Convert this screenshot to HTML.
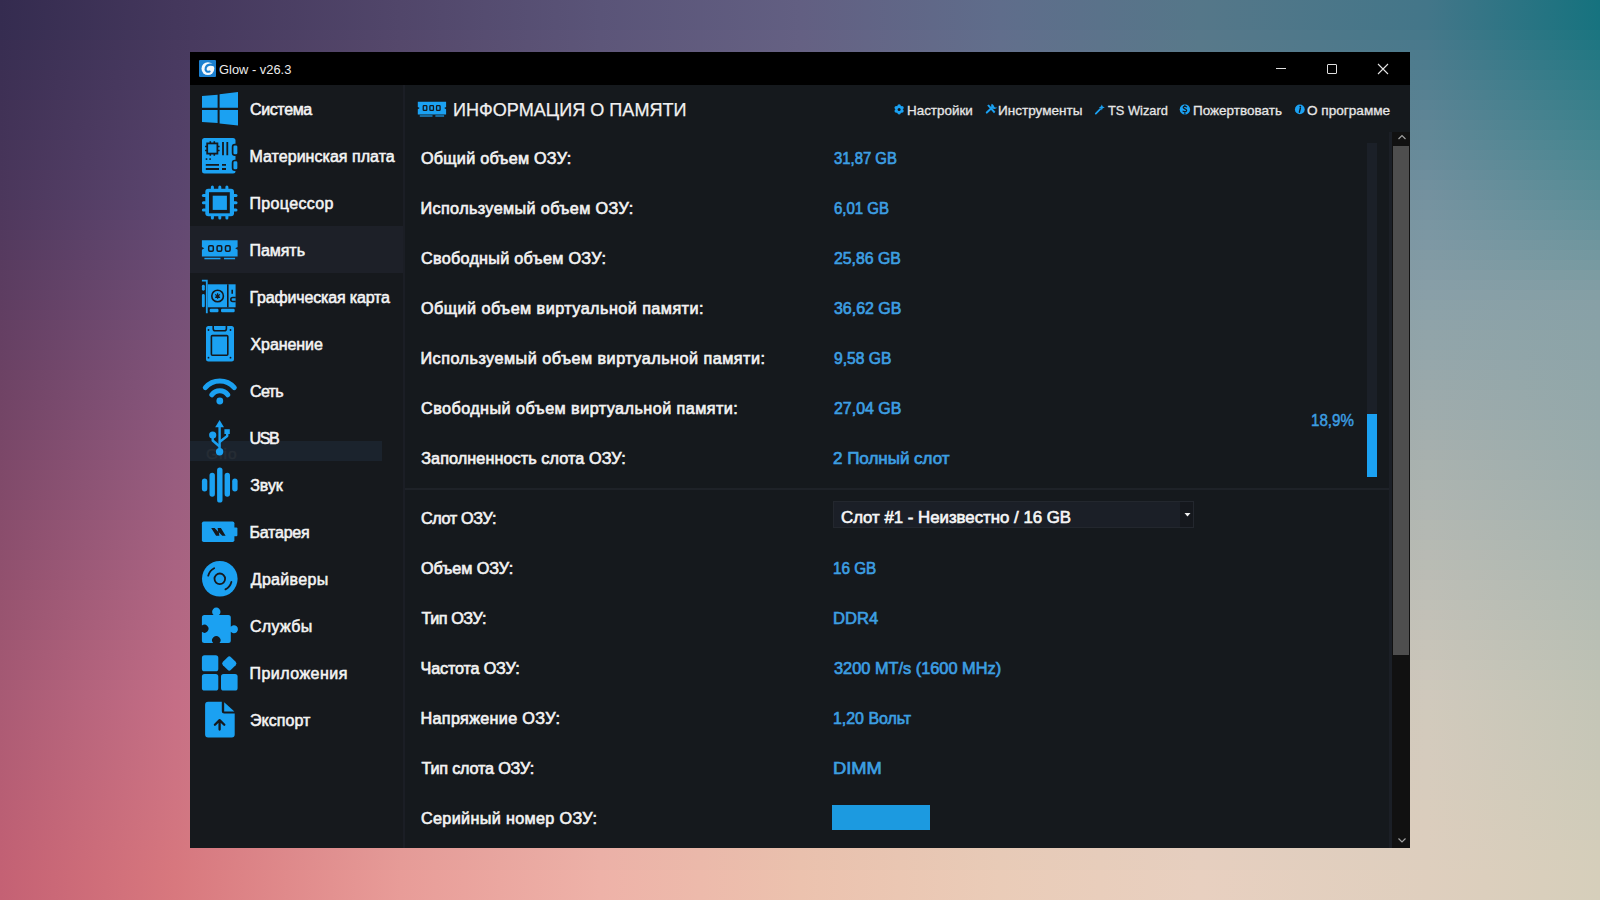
<!DOCTYPE html>
<html><head><meta charset="utf-8"><style>
*{margin:0;padding:0;box-sizing:border-box}
body{width:1600px;height:900px;overflow:hidden;position:relative;font-family:"Liberation Sans",sans-serif;background:#7a6a80}
.a{position:absolute}
.t{position:absolute;line-height:1;white-space:nowrap;transform-origin:0 0}
.ic{position:absolute;width:38px;height:36px}
.ic svg{display:block}
.st{position:absolute;left:250px;height:20px;line-height:20px;font-size:15px;font-weight:700;color:#f4f4f4;white-space:nowrap}
.lb{position:absolute;left:420px;height:20px;line-height:20px;font-size:15.7px;font-weight:700;color:#f2f2f2;white-space:nowrap}
.vl{position:absolute;left:833px;height:20px;line-height:20px;font-size:15.2px;font-weight:700;color:#3d9fe2;white-space:nowrap}
.mn{position:absolute;top:99px;height:20px;line-height:20px;font-size:13.2px;color:#e6e6e6;white-space:nowrap}
</style></head><body>
<div style="position:absolute;left:0;top:0px;width:1600px;height:10px;background:linear-gradient(90deg,#342b4f 0px,#44375c 175px,#51466a 400px,#5a5478 600px,#625f82 800px,#5f6d8b 1000px,#557789 1200px,#437689 1427px,#15727e 1600px)"></div>
<div style="position:absolute;left:0;top:10px;width:1600px;height:10px;background:linear-gradient(90deg,#352c50 0px,#44375c 175px,#51466a 400px,#5a5478 600px,#625f82 800px,#5f6d8b 1000px,#557789 1200px,#437689 1427px,#16737f 1600px)"></div>
<div style="position:absolute;left:0;top:20px;width:1600px;height:10px;background:linear-gradient(90deg,#352c50 0px,#44375c 175px,#51466a 400px,#5a5478 600px,#625f82 800px,#5f6d8b 1000px,#557789 1200px,#437689 1427px,#17737f 1600px)"></div>
<div style="position:absolute;left:0;top:30px;width:1600px;height:10px;background:linear-gradient(90deg,#362d51 0px,#45385d 175px,#53476b 400px,#5c5579 600px,#646083 800px,#616e8c 1000px,#57788a 1200px,#46788a 1427px,#1b7580 1600px)"></div>
<div style="position:absolute;left:0;top:40px;width:1600px;height:10px;background:linear-gradient(90deg,#382d51 0px,#47395e 175px,#55486b 400px,#5d5679 600px,#656183 800px,#626f8c 1000px,#58798a 1200px,#49798c 1427px,#1f7682 1600px)"></div>
<div style="position:absolute;left:0;top:50px;width:1600px;height:10px;background:linear-gradient(90deg,#392e52 0px,#483a5f 175px,#56496c 400px,#5f577a 600px,#676284 800px,#64708d 1000px,#5a7a8b 1200px,#4c7b8d 1427px,#237883 1600px)"></div>
<div style="position:absolute;left:0;top:60px;width:1600px;height:10px;background:linear-gradient(90deg,#3a2f53 0px,#493a61 175px,#584a6c 400px,#61587a 600px,#686484 800px,#66728d 1000px,#5c7b8c 1200px,#4e7c8e 1427px,#277985 1600px)"></div>
<div style="position:absolute;left:0;top:70px;width:1600px;height:10px;background:linear-gradient(90deg,#3c2f53 0px,#4b3b62 175px,#5a4b6d 400px,#63597b 600px,#6a6585 800px,#67738e 1000px,#5e7c8c 1200px,#517e90 1427px,#2b7b86 1600px)"></div>
<div style="position:absolute;left:0;top:80px;width:1600px;height:10px;background:linear-gradient(90deg,#3d3054 0px,#4c3c63 175px,#5c4c6d 400px,#645b7b 600px,#6c6685 800px,#69748e 1000px,#5f7d8d 1200px,#548091 1427px,#2f7c88 1600px)"></div>
<div style="position:absolute;left:0;top:90px;width:1600px;height:10px;background:linear-gradient(90deg,#3e3055 0px,#4e3d64 175px,#5d4d6e 400px,#665c7c 600px,#6d6786 800px,#6b758f 1000px,#617e8d 1200px,#578192 1427px,#337e89 1600px)"></div>
<div style="position:absolute;left:0;top:100px;width:1600px;height:10px;background:linear-gradient(90deg,#403155 0px,#4f3e65 175px,#5f4e6e 400px,#685d7d 600px,#6f6886 800px,#6c768f 1000px,#637f8e 1200px,#5a8394 1427px,#377f8a 1600px)"></div>
<div style="position:absolute;left:0;top:110px;width:1600px;height:10px;background:linear-gradient(90deg,#413256 0px,#503f66 175px,#614f6f 400px,#695e7d 600px,#706987 800px,#6e7790 1000px,#64808f 1200px,#5d8495 1427px,#3a818c 1600px)"></div>
<div style="position:absolute;left:0;top:120px;width:1600px;height:10px;background:linear-gradient(90deg,#423257 0px,#524067 175px,#63506f 400px,#6b5f7e 600px,#726a87 800px,#707890 1000px,#66818f 1200px,#608696 1427px,#3e828d 1600px)"></div>
<div style="position:absolute;left:0;top:130px;width:1600px;height:10px;background:linear-gradient(90deg,#433358 0px,#534069 175px,#645170 400px,#6d607e 600px,#746c88 800px,#717a91 1000px,#688290 1200px,#628897 1427px,#42848f 1600px)"></div>
<div style="position:absolute;left:0;top:140px;width:1600px;height:10px;background:linear-gradient(90deg,#453458 0px,#54416a 175px,#665270 400px,#6f617f 600px,#756d88 800px,#737b91 1000px,#6a8391 1200px,#658999 1427px,#468690 1600px)"></div>
<div style="position:absolute;left:0;top:150px;width:1600px;height:10px;background:linear-gradient(90deg,#463459 0px,#56426b 175px,#685371 400px,#70627f 600px,#776e89 800px,#757c92 1000px,#6b8491 1200px,#688b9a 1427px,#4a8792 1600px)"></div>
<div style="position:absolute;left:0;top:160px;width:1600px;height:10px;background:linear-gradient(90deg,#47355a 0px,#57436c 175px,#6a5471 400px,#726380 600px,#786f89 800px,#767d92 1000px,#6d8592 1200px,#6b8c9b 1427px,#4e8993 1600px)"></div>
<div style="position:absolute;left:0;top:170px;width:1600px;height:10px;background:linear-gradient(90deg,#49355a 0px,#59446d 175px,#6c5572 400px,#746481 600px,#7a708a 800px,#787e93 1000px,#6f8692 1200px,#6e8e9d 1427px,#528a94 1600px)"></div>
<div style="position:absolute;left:0;top:180px;width:1600px;height:10px;background:linear-gradient(90deg,#4a365b 0px,#5a456e 175px,#6d5672 400px,#756581 600px,#7c718a 800px,#7a7f93 1000px,#708793 1200px,#71909e 1427px,#568c96 1600px)"></div>
<div style="position:absolute;left:0;top:190px;width:1600px;height:10px;background:linear-gradient(90deg,#4b375c 0px,#5b466f 175px,#6f5773 400px,#776682 600px,#7d728b 800px,#7b8094 1000px,#728894 1200px,#74919f 1427px,#5a8d97 1600px)"></div>
<div style="position:absolute;left:0;top:200px;width:1600px;height:10px;background:linear-gradient(90deg,#4d375c 0px,#5d4670 175px,#715873 400px,#796882 600px,#7f748b 800px,#7d8294 1000px,#748a94 1200px,#7693a0 1427px,#5e8f99 1600px)"></div>
<div style="position:absolute;left:0;top:210px;width:1600px;height:10px;background:linear-gradient(90deg,#4f385d 0px,#5f4771 175px,#735a74 400px,#7b6983 600px,#81758c 800px,#7e8395 1000px,#768b95 1200px,#7894a1 1427px,#62919a 1600px)"></div>
<div style="position:absolute;left:0;top:220px;width:1600px;height:10px;background:linear-gradient(90deg,#50385d 0px,#624872 175px,#745a74 400px,#7c6a84 600px,#82768c 800px,#808496 1000px,#788c96 1200px,#7a96a2 1427px,#66929c 1600px)"></div>
<div style="position:absolute;left:0;top:230px;width:1600px;height:10px;background:linear-gradient(90deg,#52395e 0px,#644972 175px,#765c75 400px,#7e6b84 600px,#84778d 800px,#828596 1000px,#798d96 1200px,#7c97a3 1427px,#6b949d 1600px)"></div>
<div style="position:absolute;left:0;top:240px;width:1600px;height:10px;background:linear-gradient(90deg,#543a5e 0px,#664a73 175px,#785c76 400px,#806c85 600px,#86788d 800px,#838697 1000px,#7b8e97 1200px,#7e98a4 1427px,#6f969e 1600px)"></div>
<div style="position:absolute;left:0;top:250px;width:1600px;height:10px;background:linear-gradient(90deg,#563a5f 0px,#684a73 175px,#7a5e76 400px,#826d85 600px,#877a8e 800px,#858797 1000px,#7d8f98 1200px,#819aa4 1427px,#7398a0 1600px)"></div>
<div style="position:absolute;left:0;top:260px;width:1600px;height:10px;background:linear-gradient(90deg,#583b5f 0px,#6a4b74 175px,#7c5e77 400px,#846e86 600px,#897b8e 800px,#868898 1000px,#7f9099 1200px,#839ba5 1427px,#779aa1 1600px)"></div>
<div style="position:absolute;left:0;top:270px;width:1600px;height:10px;background:linear-gradient(90deg,#5a3c60 0px,#6c4c74 175px,#7e6078 400px,#866f86 600px,#8b7c8f 800px,#888998 1000px,#809199 1200px,#859ca6 1427px,#7c9ca2 1600px)"></div>
<div style="position:absolute;left:0;top:280px;width:1600px;height:10px;background:linear-gradient(90deg,#5b3c60 0px,#6f4d75 175px,#7f6078 400px,#877087 600px,#8c7d8f 800px,#8a8a99 1000px,#82929a 1200px,#879ea7 1427px,#809da4 1600px)"></div>
<div style="position:absolute;left:0;top:290px;width:1600px;height:10px;background:linear-gradient(90deg,#5d3d61 0px,#714e76 175px,#816279 400px,#897188 600px,#8e7e90 800px,#8b8b9a 1000px,#84939b 1200px,#899fa8 1427px,#849fa5 1600px)"></div>
<div style="position:absolute;left:0;top:300px;width:1600px;height:10px;background:linear-gradient(90deg,#5f3d61 0px,#734e76 175px,#836279 400px,#8b7388 600px,#908090 800px,#8d8d9a 1000px,#86959b 1200px,#8ba1a8 1427px,#87a0a6 1600px)"></div>
<div style="position:absolute;left:0;top:310px;width:1600px;height:10px;background:linear-gradient(90deg,#613e62 0px,#754f77 175px,#85647a 400px,#8d7489 600px,#918191 800px,#8e8e9b 1000px,#88969c 1200px,#8da2a9 1427px,#88a1a7 1600px)"></div>
<div style="position:absolute;left:0;top:320px;width:1600px;height:10px;background:linear-gradient(90deg,#633f62 0px,#775077 175px,#86647a 400px,#8e7589 600px,#938291 800px,#908f9b 1000px,#89979c 1200px,#8fa3a9 1427px,#89a2a7 1600px)"></div>
<div style="position:absolute;left:0;top:330px;width:1600px;height:10px;background:linear-gradient(90deg,#653f63 0px,#795178 175px,#88667b 400px,#90768a 600px,#958392 800px,#92909c 1000px,#8b989d 1200px,#91a4a9 1427px,#8ba3a7 1600px)"></div>
<div style="position:absolute;left:0;top:340px;width:1600px;height:10px;background:linear-gradient(90deg,#664063 0px,#7c5278 175px,#8a667b 400px,#92778a 600px,#968492 800px,#93919c 1000px,#8c999e 1200px,#92a5aa 1427px,#8ca4a8 1600px)"></div>
<div style="position:absolute;left:0;top:350px;width:1600px;height:10px;background:linear-gradient(90deg,#684164 0px,#7e5279 175px,#8c687c 400px,#94788b 600px,#988593 800px,#95929d 1000px,#8e9a9e 1200px,#94a6aa 1427px,#8da4a8 1600px)"></div>
<div style="position:absolute;left:0;top:360px;width:1600px;height:10px;background:linear-gradient(90deg,#6a4164 0px,#805379 175px,#8d687c 400px,#95798b 600px,#998693 800px,#96939d 1000px,#909b9f 1200px,#96a7ab 1427px,#8fa5a9 1600px)"></div>
<div style="position:absolute;left:0;top:370px;width:1600px;height:10px;background:linear-gradient(90deg,#6c4264 0px,#82547a 175px,#8f6a7d 400px,#977a8c 600px,#9b8894 800px,#98949e 1000px,#929ca0 1200px,#98a8ab 1427px,#90a6a9 1600px)"></div>
<div style="position:absolute;left:0;top:380px;width:1600px;height:10px;background:linear-gradient(90deg,#6e4365 0px,#84557b 175px,#916a7e 400px,#997c8d 600px,#9d8995 800px,#9a959f 1000px,#939da0 1200px,#9aa9ab 1427px,#91a7a9 1600px)"></div>
<div style="position:absolute;left:0;top:390px;width:1600px;height:10px;background:linear-gradient(90deg,#704365 0px,#86567b 175px,#926c7e 400px,#9a7d8d 600px,#9e8a95 800px,#9b969f 1000px,#959ea1 1200px,#9caaac 1427px,#93a8aa 1600px)"></div>
<div style="position:absolute;left:0;top:400px;width:1600px;height:10px;background:linear-gradient(90deg,#724466 0px,#88567c 175px,#946c7f 400px,#9c7e8e 600px,#a08b96 800px,#9d97a0 1000px,#969fa1 1200px,#9eabac 1427px,#94a8aa 1600px)"></div>
<div style="position:absolute;left:0;top:410px;width:1600px;height:10px;background:linear-gradient(90deg,#734566 0px,#8b577c 175px,#966e7f 400px,#9e7f8e 600px,#a18c96 800px,#9e98a0 1000px,#98a0a2 1200px,#9facad 1427px,#95a9ab 1600px)"></div>
<div style="position:absolute;left:0;top:420px;width:1600px;height:10px;background:linear-gradient(90deg,#754567 0px,#8d587d 175px,#986e80 400px,#a0808f 600px,#a38d97 800px,#a099a1 1000px,#9aa1a2 1200px,#a1adad 1427px,#97aaab 1600px)"></div>
<div style="position:absolute;left:0;top:430px;width:1600px;height:10px;background:linear-gradient(90deg,#774667 0px,#8f597d 175px,#997080 400px,#a1818f 600px,#a58e97 800px,#a29aa1 1000px,#9ca2a3 1200px,#a3aead 1427px,#98abab 1600px)"></div>
<div style="position:absolute;left:0;top:440px;width:1600px;height:10px;background:linear-gradient(90deg,#794768 0px,#915a7e 175px,#9b7081 400px,#a38290 600px,#a68f98 800px,#a39ba2 1000px,#9da3a4 1200px,#a5afae 1427px,#99acac 1600px)"></div>
<div style="position:absolute;left:0;top:450px;width:1600px;height:10px;background:linear-gradient(90deg,#7b4768 0px,#935a7e 175px,#9d7281 400px,#a58490 600px,#a89198 800px,#a59da2 1000px,#9fa5a4 1200px,#a7b0ae 1427px,#9bacac 1600px)"></div>
<div style="position:absolute;left:0;top:460px;width:1600px;height:10px;background:linear-gradient(90deg,#7d4869 0px,#955b7e 175px,#9f7282 400px,#a78591 600px,#a99299 800px,#a69ea3 1000px,#a1a6a5 1200px,#a9b2af 1427px,#9cadad 1600px)"></div>
<div style="position:absolute;left:0;top:470px;width:1600px;height:10px;background:linear-gradient(90deg,#7f4969 0px,#975c7f 175px,#a07482 400px,#a88691 600px,#ab9399 800px,#a89fa3 1000px,#a2a7a6 1200px,#aab2af 1427px,#9eaead 1600px)"></div>
<div style="position:absolute;left:0;top:480px;width:1600px;height:10px;background:linear-gradient(90deg,#804a6a 0px,#995d7f 175px,#a27483 400px,#aa8792 600px,#ad949a 800px,#aaa0a4 1000px,#a4a8a6 1200px,#acb4b0 1427px,#a0afad 1600px)"></div>
<div style="position:absolute;left:0;top:490px;width:1600px;height:10px;background:linear-gradient(90deg,#824a6a 0px,#9b5e7f 175px,#a47684 400px,#ac8893 600px,#ae959a 800px,#aba1a4 1000px,#a6a9a7 1200px,#aeb4b1 1427px,#a1b0ae 1600px)"></div>
<div style="position:absolute;left:0;top:500px;width:1600px;height:10px;background:linear-gradient(90deg,#844b6b 0px,#9d5e80 175px,#a67684 400px,#ae8993 600px,#b0979b 800px,#ada2a5 1000px,#a8aaa8 1200px,#afb6b1 1427px,#a3b1ae 1600px)"></div>
<div style="position:absolute;left:0;top:510px;width:1600px;height:10px;background:linear-gradient(90deg,#864c6b 0px,#9f5f80 175px,#a87885 400px,#af8a94 600px,#b2989b 800px,#afa3a5 1000px,#a9aba8 1200px,#b1b6b2 1427px,#a4b2af 1600px)"></div>
<div style="position:absolute;left:0;top:520px;width:1600px;height:10px;background:linear-gradient(90deg,#884d6c 0px,#a16080 175px,#aa7885 400px,#b18b94 600px,#b3999c 800px,#b0a4a6 1000px,#abaca9 1200px,#b3b8b2 1427px,#a6b3af 1600px)"></div>
<div style="position:absolute;left:0;top:530px;width:1600px;height:10px;background:linear-gradient(90deg,#8a4d6c 0px,#a36181 175px,#ab7a86 400px,#b38d95 600px,#b59a9c 800px,#b2a6a6 1000px,#adadaa 1200px,#b4b8b3 1427px,#a8b4af 1600px)"></div>
<div style="position:absolute;left:0;top:540px;width:1600px;height:10px;background:linear-gradient(90deg,#8b4e6d 0px,#a56281 175px,#ad7a86 400px,#b58e95 600px,#b79b9d 800px,#b4a7a7 1000px,#afaeaa 1200px,#b6bab3 1427px,#a9b5b0 1600px)"></div>
<div style="position:absolute;left:0;top:550px;width:1600px;height:10px;background:linear-gradient(90deg,#8d4f6d 0px,#a76281 175px,#af7c87 400px,#b68f96 600px,#b89d9d 800px,#b5a8a7 1000px,#b0afab 1200px,#b8bab4 1427px,#abb6b0 1600px)"></div>
<div style="position:absolute;left:0;top:560px;width:1600px;height:10px;background:linear-gradient(90deg,#8f506e 0px,#a96382 175px,#b17c87 400px,#b89096 600px,#ba9e9e 800px,#b7a9a8 1000px,#b2b0ac 1200px,#b9bcb4 1427px,#acb7b1 1600px)"></div>
<div style="position:absolute;left:0;top:570px;width:1600px;height:10px;background:linear-gradient(90deg,#91506e 0px,#ab6482 175px,#b27e88 400px,#ba9197 600px,#bc9f9e 800px,#b8aaa8 1000px,#b4b1ac 1200px,#bbbcb5 1427px,#aeb8b1 1600px)"></div>
<div style="position:absolute;left:0;top:580px;width:1600px;height:10px;background:linear-gradient(90deg,#93516e 0px,#ad6582 175px,#b47e89 400px,#bc9298 600px,#bda09f 800px,#baaba9 1000px,#b6b2ad 1200px,#bdbeb6 1427px,#b0b9b1 1600px)"></div>
<div style="position:absolute;left:0;top:590px;width:1600px;height:10px;background:linear-gradient(90deg,#95526f 0px,#af6683 175px,#b68089 400px,#be9398 600px,#bfa1a0 800px,#bcacaa 1000px,#b8b3ae 1200px,#bebeb6 1427px,#b1bab2 1600px)"></div>
<div style="position:absolute;left:0;top:600px;width:1600px;height:10px;background:linear-gradient(90deg,#97536f 0px,#b16683 175px,#b8808a 400px,#bf9499 600px,#c0a3a0 800px,#bdadaa 1000px,#b9b4af 1200px,#c0c0b7 1427px,#b3bbb2 1600px)"></div>
<div style="position:absolute;left:0;top:610px;width:1600px;height:10px;background:linear-gradient(90deg,#985470 0px,#b36783 175px,#ba828a 400px,#c19599 600px,#c2a4a1 800px,#bfaeab 1000px,#bbb5af 1200px,#c2c0b7 1427px,#b4bcb3 1600px)"></div>
<div style="position:absolute;left:0;top:620px;width:1600px;height:10px;background:linear-gradient(90deg,#9a5470 0px,#b56884 175px,#bc828b 400px,#c3979a 600px,#c4a5a1 800px,#c1b0ab 1000px,#bdb6b0 1200px,#c3c2b8 1427px,#b6bdb3 1600px)"></div>
<div style="position:absolute;left:0;top:630px;width:1600px;height:10px;background:linear-gradient(90deg,#9c5571 0px,#b76984 175px,#bd848b 400px,#c5989a 600px,#c5a6a2 800px,#c2b1ac 1000px,#bfb7b1 1200px,#c5c2b8 1427px,#b8beb3 1600px)"></div>
<div style="position:absolute;left:0;top:640px;width:1600px;height:10px;background:linear-gradient(90deg,#9e5671 0px,#b96a84 175px,#bf848c 400px,#c6999b 600px,#c7a7a2 800px,#c4b2ac 1000px,#c0b8b1 1200px,#c7c4b9 1427px,#b9bfb4 1600px)"></div>
<div style="position:absolute;left:0;top:650px;width:1600px;height:10px;background:linear-gradient(90deg,#a05772 0px,#bb6a85 175px,#c1868c 400px,#c89a9b 600px,#c9a9a3 800px,#c6b3ad 1000px,#c2b9b2 1200px,#c8c4b9 1427px,#bbc0b4 1600px)"></div>
<div style="position:absolute;left:0;top:660px;width:1600px;height:10px;background:linear-gradient(90deg,#a25772 0px,#bd6b85 175px,#c3868d 400px,#ca9b9c 600px,#caaaa3 800px,#c7b4ad 1000px,#c4bab3 1200px,#cac6ba 1427px,#bcc1b5 1600px)"></div>
<div style="position:absolute;left:0;top:670px;width:1600px;height:10px;background:linear-gradient(90deg,#a35873 0px,#bf6c85 175px,#c4888e 400px,#cc9c9d 600px,#ccaba4 800px,#c9b5ae 1000px,#c6bbb3 1200px,#ccc6bb 1427px,#bec2b5 1600px)"></div>
<div style="position:absolute;left:0;top:680px;width:1600px;height:10px;background:linear-gradient(90deg,#a55973 0px,#c16d86 175px,#c6888e 400px,#cd9d9d 600px,#ceaca4 800px,#cbb6ae 1000px,#c7bcb4 1200px,#cdc8bb 1427px,#c0c3b5 1600px)"></div>
<div style="position:absolute;left:0;top:690px;width:1600px;height:10px;background:linear-gradient(90deg,#a75a74 0px,#c36e86 175px,#c88a8f 400px,#cf9e9e 600px,#cfada5 800px,#ccb7af 1000px,#c9bdb5 1200px,#cfc8bc 1427px,#c1c4b6 1600px)"></div>
<div style="position:absolute;left:0;top:700px;width:1600px;height:10px;background:linear-gradient(90deg,#a95a74 0px,#c56e86 175px,#ca8b8f 400px,#d1a09e 600px,#d1afa5 800px,#ceb9af 1000px,#cbbfb5 1200px,#d0c9bc 1427px,#c3c4b6 1600px)"></div>
<div style="position:absolute;left:0;top:710px;width:1600px;height:10px;background:linear-gradient(90deg,#aa5b74 0px,#c66f85 175px,#cc8c90 400px,#d3a19f 600px,#d2b0a6 800px,#cfbab0 1000px,#cdc0b6 1200px,#d1cabc 1427px,#c4c5b6 1600px)"></div>
<div style="position:absolute;left:0;top:720px;width:1600px;height:10px;background:linear-gradient(90deg,#ac5b74 0px,#c76f85 175px,#cd8d90 400px,#d4a29f 600px,#d4b1a6 800px,#d1bbb0 1000px,#cec1b7 1200px,#d2cabc 1427px,#c5c6b7 1600px)"></div>
<div style="position:absolute;left:0;top:730px;width:1600px;height:10px;background:linear-gradient(90deg,#ae5b74 0px,#c87084 175px,#cf8e91 400px,#d6a3a0 600px,#d6b2a7 800px,#d3bcb1 1000px,#d0c2b7 1200px,#d3cabc 1427px,#c6c6b7 1600px)"></div>
<div style="position:absolute;left:0;top:740px;width:1600px;height:10px;background:linear-gradient(90deg,#af5c74 0px,#c97184 175px,#d18f91 400px,#d8a4a1 600px,#d7b3a7 800px,#d4bdb1 1000px,#d2c3b8 1200px,#d4cbbd 1427px,#c7c7b7 1600px)"></div>
<div style="position:absolute;left:0;top:750px;width:1600px;height:10px;background:linear-gradient(90deg,#b15c74 0px,#ca7183 175px,#d39092 400px,#d9a5a1 600px,#d9b4a8 800px,#d6beb2 1000px,#d3c4b8 1200px,#d5cbbd 1427px,#c8c7b8 1600px)"></div>
<div style="position:absolute;left:0;top:760px;width:1600px;height:10px;background:linear-gradient(90deg,#b25d74 0px,#cb7283 175px,#d59192 400px,#dba6a2 600px,#dab5a8 800px,#d8bfb2 1000px,#d5c5b9 1200px,#d6cbbd 1427px,#c9c8b8 1600px)"></div>
<div style="position:absolute;left:0;top:770px;width:1600px;height:10px;background:linear-gradient(90deg,#b45d74 0px,#cd7283 175px,#d69293 400px,#dda7a2 600px,#dcb7a9 800px,#d9c1b3 1000px,#d7c6ba 1200px,#d6ccbd 1427px,#cbc9b8 1600px)"></div>
<div style="position:absolute;left:0;top:780px;width:1600px;height:10px;background:linear-gradient(90deg,#b65d74 0px,#ce7382 175px,#d89393 400px,#dfa8a3 600px,#deb8a9 800px,#dbc2b3 1000px,#d9c7ba 1200px,#d7ccbd 1427px,#ccc9b8 1600px)"></div>
<div style="position:absolute;left:0;top:790px;width:1600px;height:10px;background:linear-gradient(90deg,#b75e74 0px,#cf7382 175px,#da9494 400px,#e0a9a3 600px,#dfb9aa 800px,#ddc3b4 1000px,#dac8bb 1200px,#d8ccbd 1427px,#cdcab9 1600px)"></div>
<div style="position:absolute;left:0;top:800px;width:1600px;height:10px;background:linear-gradient(90deg,#b95e74 0px,#d07481 175px,#dc9594 400px,#e2aaa4 600px,#e1baaa 800px,#dec4b4 1000px,#dcc9bc 1200px,#d9cdbd 1427px,#cecbb9 1600px)"></div>
<div style="position:absolute;left:0;top:810px;width:1600px;height:10px;background:linear-gradient(90deg,#ba5f74 0px,#d17581 175px,#dd9695 400px,#e4aba5 600px,#e2bbab 800px,#e0c5b5 1000px,#decabc 1200px,#dacdbd 1427px,#cfcbb9 1600px)"></div>
<div style="position:absolute;left:0;top:820px;width:1600px;height:10px;background:linear-gradient(90deg,#bc5f74 0px,#d27580 175px,#df9795 400px,#e5ada5 600px,#e4bcab 800px,#e2c6b5 1000px,#dfcbbd 1200px,#dbcdbd 1427px,#d0ccba 1600px)"></div>
<div style="position:absolute;left:0;top:830px;width:1600px;height:10px;background:linear-gradient(90deg,#be5f74 0px,#d37680 175px,#e19896 400px,#e7aea6 600px,#e6bdac 800px,#e3c7b6 1000px,#e1ccbd 1200px,#dccebe 1427px,#d1ccba 1600px)"></div>
<div style="position:absolute;left:0;top:840px;width:1600px;height:10px;background:linear-gradient(90deg,#bf6074 0px,#d5767f 175px,#e39996 400px,#e9afa6 600px,#e7bfac 800px,#e5c9b6 1000px,#e3cdbe 1200px,#dccebe 1427px,#d3cdba 1600px)"></div>
<div style="position:absolute;left:0;top:850px;width:1600px;height:10px;background:linear-gradient(90deg,#c16074 0px,#d6777f 175px,#e49a97 400px,#ebb0a7 600px,#e9c0ad 800px,#e7cab7 1000px,#e5cebf 1200px,#ddcebe 1427px,#d4ceba 1600px)"></div>
<div style="position:absolute;left:0;top:860px;width:1600px;height:10px;background:linear-gradient(90deg,#c26174 0px,#d7777e 175px,#e69b97 400px,#ecb1a7 600px,#eac1ad 800px,#e8cbb7 1000px,#e6cfbf 1200px,#decfbe 1427px,#d5cebb 1600px)"></div>
<div style="position:absolute;left:0;top:870px;width:1600px;height:10px;background:linear-gradient(90deg,#c46174 0px,#d8787e 175px,#e89c98 400px,#eeb2a8 600px,#ecc2ae 800px,#eaccb8 1000px,#e8d0c0 1200px,#dfcfbe 1427px,#d6cfbb 1600px)"></div>
<div style="position:absolute;left:0;top:880px;width:1600px;height:10px;background:linear-gradient(90deg,#c46174 0px,#d8787e 175px,#e89c98 400px,#eeb2a8 600px,#ecc2ae 800px,#eaccb8 1000px,#e8d0c0 1200px,#dfcfbe 1427px,#d6cfbb 1600px)"></div>
<div style="position:absolute;left:0;top:890px;width:1600px;height:10px;background:linear-gradient(90deg,#c46174 0px,#d8787e 175px,#e89c98 400px,#eeb2a8 600px,#ecc2ae 800px,#eaccb8 1000px,#e8d0c0 1200px,#dfcfbe 1427px,#d6cfbb 1600px)"></div>
<!-- window -->
<div class="a" style="left:190px;top:52px;width:1220px;height:796px;background:#15191d"></div>
<div class="a" style="left:190px;top:52px;width:1220px;height:33px;background:#000"></div>
<div class="a" style="left:190px;top:85px;width:213px;height:763px;background:#16191d"></div>
<div class="a" style="left:403px;top:85px;width:2px;height:763px;background:#1b1e25"></div>
<!-- title -->
<div class="a" style="left:199px;top:60px;width:17px;height:17px;background:#1b7fcf;border-radius:1px"></div>
<svg class="a" style="left:0;top:0" width="1600" height="900" viewBox="0 0 1600 900"><circle cx="207.9" cy="68.6" r="6.4" fill="#f4f8fc"/><path d="M215 66C212 63.9 207.2 64 205.8 67.6C204.9 70.3 206.8 72.4 209.6 71.6" fill="none" stroke="#1b7fcf" stroke-width="2.1" stroke-linecap="round"/><path d="M214.5 65.7L216 63V66.8Z" fill="#1b7fcf"/></svg>
<div class="t" style="left:219.24px;top:64.16px;font-size:12.8px;font-weight:400;color:#ececec;transform:scaleX(1.0071);">Glow - v26.3</div>
<div class="a" style="left:1276px;top:68px;width:10px;height:1px;background:#e0e0e0"></div>
<div class="a" style="left:1327px;top:64px;width:10px;height:10px;border:1px solid #e0e0e0;border-radius:1px"></div>
<svg class="a" style="left:1377px;top:63px" width="12" height="12" viewBox="0 0 12 12"><path d="M1 1L11 11M11 1L1 11" stroke="#e4e4e4" stroke-width="1.1"/></svg>
<!-- sidebar -->
<div class="a" style="left:190px;top:226px;width:213px;height:47px;background:#1d2028"></div>
<div class="a" style="left:190px;top:441px;width:192px;height:20px;background:#1b232d"></div>
<div class="t" style="left:206px;top:445.5px;font-size:15.5px;color:#262d35;-webkit-text-stroke:0.5px #262d35;letter-spacing:1px">Glio</div>
<svg class="a" style="left:0;top:0" width="1600" height="900" viewBox="0 0 1600 900"><path fill="#1ba1f2" d="M202 96 L217.6 94.8 L217.6 107.8 L202 107.8Z M219.6 94.3 L238 92.1 L238 107.8 L219.6 107.8Z M202 110 L217.6 110 L217.6 122.9 L202 122Z M219.6 110 L238 110 L238 125.6 L219.6 123.4Z"/><g transform="translate(202,138)"><rect x="0" y="0" width="33.5" height="35.6" rx="2.5" fill="#1ba1f2"/><rect x="30.6" y="6.6" width="5.6" height="10.6" rx="2.2" fill="#1ba1f2" stroke="#16191d" stroke-width="1.7"/><rect x="30.6" y="22.5" width="5.6" height="9.6" rx="2.2" fill="#1ba1f2" stroke="#16191d" stroke-width="1.7"/><rect x="5.2" y="5.4" width="10.2" height="10.2" fill="none" stroke="#16191d" stroke-width="1.8"/><path d="M8.3 3.3v2.2M12.3 3.3v2.2M8.3 15.6v2.2M12.3 15.6v2.2M3.1 8.5h2.2M3.1 12.5h2.2M15.4 8.5h2.2M15.4 12.5h2.2" stroke="#16191d" stroke-width="1.6"/><path d="M21 4v13.3M25.3 4v13.3" stroke="#16191d" stroke-width="1.8"/><rect x="3.7" y="20.3" width="1.6" height="1.6" fill="#16191d"/><rect x="7.3" y="20.3" width="1.6" height="1.6" fill="#16191d"/><path d="M3.8 26.8h13.2M20 26.8h4M3.8 31h13.2M20 31h4" stroke="#16191d" stroke-width="1.8"/></g><g transform="translate(202,185)"><rect x="8.9" y="0.4" width="3" height="5" rx="1.5" fill="#1ba1f2"/><rect x="8.9" y="29.6" width="3" height="5" rx="1.5" fill="#1ba1f2"/><rect x="-0.1" y="8.9" width="5" height="3" rx="1.5" fill="#1ba1f2"/><rect x="30.5" y="8.9" width="5" height="3" rx="1.5" fill="#1ba1f2"/><rect x="16.3" y="0.4" width="3" height="5" rx="1.5" fill="#1ba1f2"/><rect x="16.3" y="29.6" width="3" height="5" rx="1.5" fill="#1ba1f2"/><rect x="-0.1" y="16.3" width="5" height="3" rx="1.5" fill="#1ba1f2"/><rect x="30.5" y="16.3" width="5" height="3" rx="1.5" fill="#1ba1f2"/><rect x="23.4" y="0.4" width="3" height="5" rx="1.5" fill="#1ba1f2"/><rect x="23.4" y="29.6" width="3" height="5" rx="1.5" fill="#1ba1f2"/><rect x="-0.1" y="23.4" width="5" height="3" rx="1.5" fill="#1ba1f2"/><rect x="30.5" y="23.4" width="5" height="3" rx="1.5" fill="#1ba1f2"/><rect x="3.3" y="3.8" width="28.7" height="27.4" rx="3" fill="#1ba1f2"/><rect x="7" y="7.2" width="20.8" height="21.1" fill="#16191d"/><rect x="10.7" y="10.7" width="14.2" height="14.2" fill="#1ba1f2"/></g><g transform="translate(201.9,240.2)"><path fill="#1ba1f2" d="M0 0H35.7V6.70L33.31 8.10L35.7 9.50V16.2H0V9.50L2.39 8.10L0 6.70Z"/><g fill="none" stroke="#16191d" stroke-width="1.5"><rect x="6.80" y="5.45" width="4.60" height="5.63" rx="1.2"/><rect x="15.19" y="5.45" width="4.60" height="5.63" rx="1.2"/><rect x="23.58" y="5.45" width="4.60" height="5.63" rx="1.2"/></g><rect x="2.50" y="17.60" width="16.07" height="1.5" fill="#1ba1f2"/><rect x="22.13" y="17.60" width="11.07" height="1.5" fill="#1ba1f2"/></g><g transform="translate(198,276)"><path d="M3.9 4.6H8.8V37.2" fill="none" stroke="#1ba1f2" stroke-width="1.8"/><rect x="3.9" y="8.8" width="2.9" height="5.9" rx="1.4" fill="#1ba1f2"/><rect x="3.9" y="18" width="2.9" height="13.3" rx="1.4" fill="#1ba1f2"/><path d="M9.8 8.3H37.6V31.3H9.8Z" fill="#1ba1f2"/><circle cx="19.6" cy="20" r="5.8" fill="none" stroke="#16191d" stroke-width="1.6"/><path d="M19.6 17.2v5.6M17.2 18.6l4.8 2.8M17.2 21.4l4.8-2.8" stroke="#16191d" stroke-width="1.2"/><path d="M29.8 8.3V31.3" stroke="#16191d" stroke-width="1.6"/><path d="M34.2 13.7v4" stroke="#16191d" stroke-width="1.6"/><path d="M37.8 21.5h-3a1.8 1.8 0 0 0 0 4h3" fill="none" stroke="#16191d" stroke-width="1.6"/><rect x="11.7" y="32.8" width="8.8" height="3.4" rx="1.2" fill="#1ba1f2"/><rect x="23" y="32.8" width="13.7" height="3.4" rx="1.2" fill="#1ba1f2"/></g><g transform="translate(198,320)"><rect x="8" y="5.9" width="28" height="35.7" rx="2.5" fill="#1ba1f2"/><path d="M15.2 5.9V8.8a2 2 0 0 0 2 2H26.4a2 2 0 0 0 2-2V5.9" fill="none" stroke="#16191d" stroke-width="1.6"/><rect x="13.4" y="15.6" width="16.4" height="19.6" rx="1" fill="none" stroke="#16191d" stroke-width="1.6"/><circle cx="10.5" cy="10" r="0.9" fill="#16191d"/><circle cx="32.5" cy="10" r="0.9" fill="#16191d"/><circle cx="10.5" cy="37.7" r="0.9" fill="#16191d"/><circle cx="32.5" cy="37.7" r="0.9" fill="#16191d"/></g><g fill="none" stroke="#1ba1f2" stroke-width="5" stroke-linecap="round"><path d="M205.31 387.60A19.2 19.2 0 0 1 234.29 387.60"/><path d="M211.87 394.74A9.8 9.8 0 0 1 227.73 394.74"/></g><circle cx="219.8" cy="401" r="3.4" fill="#1ba1f2"/><g fill="none" stroke="#1ba1f2" stroke-width="2.4" stroke-linejoin="round"><path d="M219.6 426v26"/><path d="M212.7 435v5.5l6.9 6"/><path d="M227.2 433.5v2.5l-7.6 6"/></g><path d="M219.6 419.9l-4.4 7.3h8.8Z" fill="#1ba1f2"/><circle cx="212.7" cy="435" r="3.6" fill="#1ba1f2"/><rect x="224.4" y="429.2" width="5.4" height="4.8" fill="#1ba1f2"/><circle cx="219.6" cy="451.7" r="3.7" fill="#1ba1f2"/><rect x="201.9" y="478.6" width="5.4" height="12.799999999999955" rx="2.7" fill="#1ba1f2"/><rect x="209.5" y="472.8" width="5.4" height="23.899999999999977" rx="2.7" fill="#1ba1f2"/><rect x="217.10000000000002" y="467.4" width="5.4" height="35.200000000000045" rx="2.7" fill="#1ba1f2"/><rect x="224.60000000000002" y="472.8" width="5.4" height="23.899999999999977" rx="2.7" fill="#1ba1f2"/><rect x="232.20000000000002" y="478.6" width="5.4" height="12.799999999999955" rx="2.7" fill="#1ba1f2"/><rect x="201.9" y="521.5" width="32.5" height="20.5" rx="1.8" fill="#1ba1f2"/><rect x="233" y="527.6" width="4.4" height="8.6" rx="1" fill="#1ba1f2"/><path d="M211.2 528.1H214.6L218.2 531.7L217.6 528.1H220.9L225.6 535.8H222.3L218.8 532.3L219.4 535.8H216.1Z" fill="#16191d"/><circle cx="219.8" cy="578.8" r="17.8" fill="#1ba1f2"/><circle cx="219.8" cy="578.8" r="5.3" fill="none" stroke="#16191d" stroke-width="1.8"/><g fill="none" stroke="#16191d" stroke-width="1.8" stroke-linecap="round"><path d="M208.21 575.69A12 12 0 0 1 214.17 568.20"/><path d="M231.39 581.91A12 12 0 0 1 225.43 589.40"/></g><path fill="#1ba1f2" d="M204.4 615H213.6A4.2 4.2 0 1 1 219 615H228.3a2.5 2.5 0 0 1 2.5 2.5V626.7A4 4 0 1 1 230.8 631.7V640.6a2.5 2.5 0 0 1-2.5 2.5H219.5A4.2 4.2 0 1 0 213.1 643.1H204.4a2.5 2.5 0 0 1-2.5-2.5V631.8A4 4 0 1 0 201.9 625.6V617.5a2.5 2.5 0 0 1 2.5-2.5Z"/><rect x="201.9" y="655.2" width="16.4" height="16.1" rx="2.6" fill="#1ba1f2"/><rect x="201.9" y="674" width="16.4" height="16.6" rx="2.6" fill="#1ba1f2"/><rect x="221" y="674" width="16.6" height="16.6" rx="2.6" fill="#1ba1f2"/><rect x="223.6" y="657.8" width="11.4" height="11.4" rx="2.4" fill="#1ba1f2" transform="rotate(45 229.3 663.5)"/><path fill="#1ba1f2" d="M208.1 701.7H221.8V711a2.5 2.5 0 0 0 2.5 2.5H234.7V734.6a3 3 0 0 1-3 3H208.1a3 3 0 0 1-3-3V704.7a3 3 0 0 1 3-3Z"/><path fill="#1ba1f2" d="M224.2 702.2L234.4 711.6H224.2Z"/><path d="M219.6 729.6V720.6M214.9 724.8l4.7-4.7 4.7 4.7" fill="none" stroke="#16191d" stroke-width="2.3" stroke-linecap="round" stroke-linejoin="round"/></svg>
<div class="t" style="left:250.00px;top:101.86px;font-size:16.0px;font-weight:400;color:#f4f4f4;-webkit-text-stroke:0.55px #f4f4f4;letter-spacing:-0.375px;">Система</div>
<div class="t" style="left:249.50px;top:148.86px;font-size:16.0px;font-weight:400;color:#f4f4f4;-webkit-text-stroke:0.55px #f4f4f4;letter-spacing:0.031px;">Материнская плата</div>
<div class="t" style="left:249.50px;top:195.86px;font-size:16.0px;font-weight:400;color:#f4f4f4;-webkit-text-stroke:0.55px #f4f4f4;letter-spacing:0.344px;">Процессор</div>
<div class="t" style="left:249.50px;top:242.86px;font-size:16.0px;font-weight:400;color:#f4f4f4;-webkit-text-stroke:0.55px #f4f4f4;letter-spacing:-0.050px;">Память</div>
<div class="t" style="left:249.50px;top:289.86px;font-size:16.0px;font-weight:400;color:#f4f4f4;-webkit-text-stroke:0.55px #f4f4f4;letter-spacing:-0.166px;">Графическая карта</div>
<div class="t" style="left:250.50px;top:336.86px;font-size:16.0px;font-weight:400;color:#f4f4f4;-webkit-text-stroke:0.55px #f4f4f4;letter-spacing:-0.071px;">Хранение</div>
<div class="t" style="left:250.00px;top:383.86px;font-size:16.0px;font-weight:400;color:#f4f4f4;-webkit-text-stroke:0.55px #f4f4f4;letter-spacing:-0.650px;">Сеть</div>
<div class="t" style="left:249.50px;top:430.86px;font-size:16.0px;font-weight:400;color:#f4f4f4;-webkit-text-stroke:0.55px #f4f4f4;letter-spacing:-1.325px;">USB</div>
<div class="t" style="left:250.25px;top:477.86px;font-size:16.0px;font-weight:400;color:#f4f4f4;-webkit-text-stroke:0.55px #f4f4f4;letter-spacing:-0.067px;">Звук</div>
<div class="t" style="left:249.50px;top:524.86px;font-size:16.0px;font-weight:400;color:#f4f4f4;-webkit-text-stroke:0.55px #f4f4f4;letter-spacing:-0.242px;">Батарея</div>
<div class="t" style="left:250.75px;top:571.86px;font-size:16.0px;font-weight:400;color:#f4f4f4;-webkit-text-stroke:0.55px #f4f4f4;letter-spacing:0.314px;">Драйверы</div>
<div class="t" style="left:250.00px;top:618.86px;font-size:16.0px;font-weight:400;color:#f4f4f4;-webkit-text-stroke:0.55px #f4f4f4;letter-spacing:0.310px;">Службы</div>
<div class="t" style="left:249.50px;top:665.86px;font-size:16.0px;font-weight:400;color:#f4f4f4;-webkit-text-stroke:0.55px #f4f4f4;letter-spacing:0.472px;">Приложения</div>
<div class="t" style="left:250.00px;top:712.86px;font-size:16.0px;font-weight:400;color:#f4f4f4;-webkit-text-stroke:0.55px #f4f4f4;letter-spacing:0.042px;">Экспорт</div>

<!-- header -->
<svg class="a" style="left:0;top:0" width="1600" height="900" viewBox="0 0 1600 900"><g transform="translate(417.8,101.8)"><path fill="#1ba1f2" d="M0 0H28.3V5.17L26.40 6.30L28.3 7.43V12.6H0V7.43L1.90 6.30L0 5.17Z"/><g fill="none" stroke="#16191d" stroke-width="1.3"><rect x="5.45" y="3.80" width="3.54" height="4.75" rx="0.7"/><rect x="12.10" y="3.80" width="3.54" height="4.75" rx="0.7"/><rect x="18.75" y="3.80" width="3.54" height="4.75" rx="0.7"/></g><rect x="1.98" y="13.60" width="12.74" height="1.2" fill="#1ba1f2"/><rect x="17.55" y="13.60" width="8.77" height="1.2" fill="#1ba1f2"/></g></svg>
<div class="t" style="left:453.24px;top:101.26px;font-size:18px;font-weight:400;color:#f0f0f0;-webkit-text-stroke:0.25px #f0f0f0;transform:scaleX(1.0043);">ИНФОРМАЦИЯ О ПАМЯТИ</div>
<div class="t" style="left:906.98px;top:103.71px;font-size:13.1px;font-weight:400;color:#e6e6e6;-webkit-text-stroke:0.3px #e6e6e6;transform:scaleX(1.0240);">Настройки</div>
<div class="t" style="left:997.97px;top:103.71px;font-size:13.1px;font-weight:400;color:#e6e6e6;-webkit-text-stroke:0.3px #e6e6e6;transform:scaleX(1.0337);">Инструменты</div>
<div class="t" style="left:1107.76px;top:103.71px;font-size:13.1px;font-weight:400;color:#e6e6e6;-webkit-text-stroke:0.3px #e6e6e6;transform:scaleX(0.9793);">TS Wizard</div>
<div class="t" style="left:1192.97px;top:103.71px;font-size:13.1px;font-weight:400;color:#e6e6e6;-webkit-text-stroke:0.3px #e6e6e6;transform:scaleX(1.0318);">Пожертвовать</div>
<div class="t" style="left:1307.48px;top:103.71px;font-size:13.1px;font-weight:400;color:#e6e6e6;-webkit-text-stroke:0.3px #e6e6e6;transform:scaleX(1.0385);">О программе</div>
<svg class="a" style="left:0;top:1px" width="1600" height="900" viewBox="0 0 1600 900">
<g fill="#1ba1f2"><circle cx="899.1" cy="108.4" r="3.6"/><circle cx="899.10" cy="105.10" r="1.75"/><circle cx="901.96" cy="106.75" r="1.75"/><circle cx="901.96" cy="110.05" r="1.75"/><circle cx="899.10" cy="111.70" r="1.75"/><circle cx="896.24" cy="110.05" r="1.75"/><circle cx="896.24" cy="106.75" r="1.75"/></g>
<circle cx="899.1" cy="108.4" r="1.5" fill="#15191d"/>
<path d="M986.8 111.6L993.2 105.6" stroke="#1ba1f2" stroke-width="2" stroke-linecap="round"/><path d="M992 103.6a2.6 2.6 0 0 0 3.6 3.4l-1.2-0.2-1.3-1.3-0.2-1.2Z" fill="#1ba1f2" stroke="#1ba1f2" stroke-width="1.2"/>
<path d="M987.2 104.6l1.6-1 6.6 7.2-1.4 1.5Z" fill="#1ba1f2"/>
<path d="M1095.8 112.6L1100.2 108.2" stroke="#1ba1f2" stroke-width="1.8" stroke-linecap="round"/>
<path d="M1101.8 103.4l0.9 2.1 2.1 0.9-2.1 0.9-0.9 2.1-0.9-2.1-2.1-0.9 2.1-0.9Z" fill="#1ba1f2"/>
<circle cx="1184.9" cy="108.4" r="5.2" fill="#1ba1f2"/>
<path d="M1186.6 105.9c-0.6-0.8-3.4-0.9-3.4 0.6c0 1.6 3.5 1.1 3.5 2.9c0 1.6-2.9 1.6-3.7 0.7M1184.9 104v0.9M1184.9 111.9v0.9" fill="none" stroke="#15191d" stroke-width="1.2" stroke-linecap="round"/>
<circle cx="1299.8" cy="108.4" r="4.9" fill="#1ba1f2"/>
<circle cx="1300.3" cy="105.6" r="0.9" fill="#15191d"/><path d="M1300.4 107.2L1299.4 111.2" stroke="#15191d" stroke-width="1.4" stroke-linecap="round"/>
</svg>
<!-- content -->
<div class="t" style="left:421.00px;top:150.29px;font-size:16.2px;font-weight:400;color:#f2f2f2;-webkit-text-stroke:0.65px #f2f2f2;letter-spacing:0.230px;">Общий объем ОЗУ:</div>
<div class="t" style="left:833.77px;top:151.26px;font-size:16.0px;font-weight:400;color:#3d9fe2;-webkit-text-stroke:0.65px #3d9fe2;transform:scaleX(0.9288);">31,87 GB</div>
<div class="t" style="left:420.50px;top:200.29px;font-size:16.2px;font-weight:400;color:#f2f2f2;-webkit-text-stroke:0.65px #f2f2f2;letter-spacing:0.373px;">Используемый объем ОЗУ:</div>
<div class="t" style="left:833.53px;top:201.26px;font-size:16.0px;font-weight:400;color:#3d9fe2;-webkit-text-stroke:0.65px #3d9fe2;transform:scaleX(0.9351);">6,01 GB</div>
<div class="t" style="left:421.00px;top:250.29px;font-size:16.2px;font-weight:400;color:#f2f2f2;-webkit-text-stroke:0.65px #f2f2f2;letter-spacing:0.274px;">Свободный объем ОЗУ:</div>
<div class="t" style="left:833.51px;top:251.26px;font-size:16.0px;font-weight:400;color:#3d9fe2;-webkit-text-stroke:0.65px #3d9fe2;transform:scaleX(0.9880);">25,86 GB</div>
<div class="t" style="left:421.00px;top:300.29px;font-size:16.2px;font-weight:400;color:#f2f2f2;-webkit-text-stroke:0.65px #f2f2f2;letter-spacing:0.448px;">Общий объем виртуальной памяти:</div>
<div class="t" style="left:833.75px;top:301.26px;font-size:16.0px;font-weight:400;color:#3d9fe2;-webkit-text-stroke:0.65px #3d9fe2;transform:scaleX(0.9948);">36,62 GB</div>
<div class="t" style="left:420.50px;top:350.29px;font-size:16.2px;font-weight:400;color:#f2f2f2;-webkit-text-stroke:0.65px #f2f2f2;letter-spacing:0.478px;">Используемый объем виртуальной памяти:</div>
<div class="t" style="left:833.51px;top:351.26px;font-size:16.0px;font-weight:400;color:#3d9fe2;-webkit-text-stroke:0.65px #3d9fe2;transform:scaleX(0.9766);">9,58 GB</div>
<div class="t" style="left:421.00px;top:400.29px;font-size:16.2px;font-weight:400;color:#f2f2f2;-webkit-text-stroke:0.65px #f2f2f2;letter-spacing:0.440px;">Свободный объем виртуальной памяти:</div>
<div class="t" style="left:833.50px;top:401.26px;font-size:16.0px;font-weight:400;color:#3d9fe2;-webkit-text-stroke:0.65px #3d9fe2;transform:scaleX(0.9955);">27,04 GB</div>
<div class="t" style="left:421.25px;top:450.29px;font-size:16.2px;font-weight:400;color:#f2f2f2;-webkit-text-stroke:0.65px #f2f2f2;letter-spacing:0.085px;">Заполненность слота ОЗУ:</div>
<div class="t" style="left:833.47px;top:451.26px;font-size:16.0px;font-weight:400;color:#3d9fe2;-webkit-text-stroke:0.65px #3d9fe2;transform:scaleX(1.0612);">2 Полный слот</div>
<div class="t" style="left:421.00px;top:509.99px;font-size:16.2px;font-weight:400;color:#f2f2f2;-webkit-text-stroke:0.65px #f2f2f2;letter-spacing:-0.381px;">Слот ОЗУ:</div>
<div class="t" style="left:421.00px;top:559.99px;font-size:16.2px;font-weight:400;color:#f2f2f2;-webkit-text-stroke:0.65px #f2f2f2;letter-spacing:-0.056px;">Объем ОЗУ:</div>
<div class="t" style="left:833.05px;top:560.96px;font-size:16.0px;font-weight:400;color:#3d9fe2;-webkit-text-stroke:0.65px #3d9fe2;transform:scaleX(0.9531);">16 GB</div>
<div class="t" style="left:421.50px;top:609.99px;font-size:16.2px;font-weight:400;color:#f2f2f2;-webkit-text-stroke:0.65px #f2f2f2;letter-spacing:-0.443px;">Тип ОЗУ:</div>
<div class="t" style="left:832.96px;top:610.96px;font-size:16.0px;font-weight:400;color:#3d9fe2;-webkit-text-stroke:0.65px #3d9fe2;transform:scaleX(1.0353);">DDR4</div>
<div class="t" style="left:420.50px;top:659.99px;font-size:16.2px;font-weight:400;color:#f2f2f2;-webkit-text-stroke:0.65px #f2f2f2;letter-spacing:-0.164px;">Частота ОЗУ:</div>
<div class="t" style="left:833.74px;top:660.96px;font-size:16.0px;font-weight:400;color:#3d9fe2;-webkit-text-stroke:0.65px #3d9fe2;transform:scaleX(1.0212);">3200 MT/s (1600 MHz)</div>
<div class="t" style="left:420.50px;top:709.99px;font-size:16.2px;font-weight:400;color:#f2f2f2;-webkit-text-stroke:0.65px #f2f2f2;letter-spacing:0.318px;">Напряжение ОЗУ:</div>
<div class="t" style="left:833.01px;top:710.96px;font-size:16.0px;font-weight:400;color:#3d9fe2;-webkit-text-stroke:0.65px #3d9fe2;transform:scaleX(0.9942);">1,20 Вольт</div>
<div class="t" style="left:421.50px;top:759.99px;font-size:16.2px;font-weight:400;color:#f2f2f2;-webkit-text-stroke:0.65px #f2f2f2;letter-spacing:-0.192px;">Тип слота ОЗУ:</div>
<div class="t" style="left:832.85px;top:760.96px;font-size:16.0px;font-weight:400;color:#3d9fe2;-webkit-text-stroke:0.65px #3d9fe2;transform:scaleX(1.1460);">DIMM</div>
<div class="t" style="left:421.00px;top:809.99px;font-size:16.2px;font-weight:400;color:#f2f2f2;-webkit-text-stroke:0.65px #f2f2f2;letter-spacing:0.333px;">Серийный номер ОЗУ:</div>
<div class="a" style="left:405px;top:488px;width:986px;height:2px;background:#1e2228"></div>
<div class="a" style="left:833px;top:501px;width:361px;height:27px;background:#1b1f27;border:1px solid #23272e"></div>
<div class="a" style="left:1180px;top:502px;width:13px;height:25px;background:#15181d"></div>
<svg class="a" style="left:1184px;top:512px" width="7" height="5" viewBox="0 0 7 5"><path d="M0.5 1h6L3.5 4.5Z" fill="#f0f0f0"/></svg>
<div class="t" style="left:841.01px;top:508.61px;font-size:17px;font-weight:400;color:#f6f6f6;-webkit-text-stroke:0.65px #f6f6f6;transform:scaleX(0.9881);">Слот #1 - Неизвестно / 16 GB</div>
<div class="a" style="left:832px;top:805px;width:98px;height:25px;background:#1c9ae0"></div>
<!-- progress -->
<div class="a" style="left:1367px;top:143px;width:10px;height:271px;background:#1b2028"></div>
<div class="a" style="left:1367px;top:414px;width:10px;height:63px;background:#1ba1f2"></div>
<div class="t" style="left:1311.07px;top:411.59px;font-size:16.2px;font-weight:400;color:#3d9fe2;-webkit-text-stroke:0.45px #3d9fe2;transform:scaleX(0.9348);">18,9%</div>
<!-- scrollbar -->
<div class="a" style="left:1389px;top:132px;width:3px;height:716px;background:#1b1f26"></div>
<div class="a" style="left:1392px;top:132px;width:18px;height:716px;background:#111111"></div>
<div class="a" style="left:1393px;top:146px;width:16px;height:509px;background:#4e4e4e"></div>
<svg class="a" style="left:1397px;top:133px" width="10" height="8" viewBox="0 0 10 8"><path d="M1.5 6L5 2.5L8.5 6" fill="none" stroke="#a0a0a0" stroke-width="1.2"/></svg>
<svg class="a" style="left:1397px;top:836px" width="10" height="8" viewBox="0 0 10 8"><path d="M1.5 2.5L5 6L8.5 2.5" fill="none" stroke="#a0a0a0" stroke-width="1.2"/></svg>
</body></html>
